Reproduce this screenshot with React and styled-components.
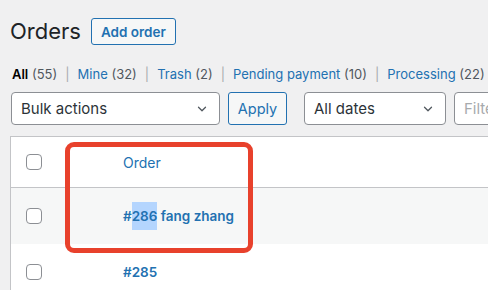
import React from "react";
import styled, { createGlobalStyle } from "styled-components";

const GlobalStyle = createGlobalStyle`
    html, body {
        margin: 0;
        padding: 0;
        background: #f0f0f1;
        overflow: hidden;
    }
    body {
        font-family: Inter, "Noto Sans", "Liberation Sans", sans-serif;
        color: #1d2327;
    }
`;

const Page = styled.div`
    position: relative;
    width: 488px;
    height: 290px;
    padding-left: 10px;
    box-sizing: border-box;
    overflow: hidden;
`;

const TitleRow = styled.div`
    display: flex;
    align-items: center;
    gap: 10px;
    padding-top: 18px;
    height: 27px;
`;

const Title = styled.h1`
    margin: 0;
    font-size: 22px;
    font-weight: 400;
    color: #1d2327;
    line-height: 27px;
`;

const OutlineButton = styled.button`
    flex: none;
    height: 27px;
    padding: 0 9px;
    border: 1px solid #2271b1;
    border-radius: 3px;
    background: #f6f7f7;
    color: #2271b1;
    font-family: inherit;
    font-size: ${(p) => p.$size || 13.5}px;
    font-weight: ${(p) => p.$weight || 600};
    box-sizing: border-box;
`;

const StatusList = styled.ul`
    display: flex;
    margin: 0;
    padding: 0;
    list-style: none;
    margin-top: 19px;
    padding-left: 2px;
    font-size: 13px;
    line-height: 20px;
    white-space: nowrap;
`;

const StatusItem = styled.li`
    color: #50575e;
`;

const StatusLink = styled.span`
    color: ${(p) => (p.$current ? "#000" : "#2271b1")};
    font-weight: ${(p) => (p.$current ? 600 : 400)};
`;

const Sep = styled.span`
    color: #a7aaad;
    margin: 0 8px;
`;

const Toolbar = styled.div`
    display: flex;
    align-items: center;
    margin-top: 8px;
    padding-left: 1px;
    gap: 8px;
    height: 33px;
`;

const Select = styled.div`
    flex: none;
    display: flex;
    align-items: center;
    justify-content: space-between;
    width: ${(p) => p.$w}px;
    height: 33px;
    padding: 0 10px 0 9px;
    box-sizing: border-box;
    border: 1px solid #8c8f94;
    border-radius: 4px;
    background: #fff;
    font-size: 15px;
    color: #2c3338;
`;

const ApplyButton = styled(OutlineButton)`
    height: 33px;
    width: 59px;
    padding: 0;
    margin-right: 9px;
`;

const FilterInput = styled.div`
    flex: none;
    width: 80px;
    height: 33px;
    padding-left: 9px;
    box-sizing: border-box;
    border: 1px solid #8c8f94;
    border-radius: 4px;
    background: #fff;
    font-size: 15px;
    line-height: 31px;
    color: #a7aaad;
`;

const Table = styled.div`
    margin-top: 11px;
    width: 600px;
    border: 1px solid #c3c4c7;
    background: #fff;
`;

const Row = styled.div`
    display: flex;
    align-items: center;
    height: ${(p) => p.$h}px;
    background: ${(p) => (p.$alt ? "#f6f7f7" : "#fff")};
    border-bottom: ${(p) => (p.$head ? "1px solid #c3c4c7" : "none")};
    box-sizing: border-box;
`;

const CheckCell = styled.div`
    width: 112px;
    padding-left: 15px;
    box-sizing: border-box;
    flex: none;
`;

const Checkbox = styled.span`
    display: block;
    width: 16px;
    height: 16px;
    border: 1px solid #8c8f94;
    border-radius: 4px;
    background: #fff;
    box-sizing: border-box;
`;

const OrderCell = styled.div`
    font-size: ${(p) => (p.$bold ? 13.5 : 14)}px;
    color: #2271b1;
    font-weight: ${(p) => (p.$bold ? 600 : 400)};
    white-space: nowrap;
`;

const Highlight = styled.span`
    background: #b4d5fe;
    padding: 6px 0;
`;

const Callout = styled.div`
    position: absolute;
    left: 65px;
    top: 142px;
    width: 188px;
    height: 111px;
    border: 5px solid #e8412c;
    border-radius: 9px;
    box-sizing: border-box;
    pointer-events: none;
`;

const Chevron = () => (
    <svg width="14" height="14" viewBox="0 0 20 20" fill="none">
        <path d="M5 7.5l5 5 5-5" stroke="#50575e" strokeWidth="1.8" strokeLinecap="round" strokeLinejoin="round" />
    </svg>
);

const statuses = [
    { label: "All", count: 55, current: true },
    { label: "Mine", count: 32 },
    { label: "Trash", count: 2 },
    { label: "Pending payment", count: 10 },
    { label: "Processing", count: 22 },
];

const App = () => {
    return (
        <Page>
            <GlobalStyle />
            <TitleRow>
                <Title>Orders</Title>
                <OutlineButton>Add order</OutlineButton>
            </TitleRow>
            <StatusList>
                {statuses.map((s, i) => (
                    <StatusItem key={s.label}>
                        <StatusLink $current={s.current}>{s.label}</StatusLink> ({s.count})
                        {i < statuses.length - 1 && <Sep>|</Sep>}
                    </StatusItem>
                ))}
            </StatusList>
            <Toolbar>
                <Select $w={209}>
                    Bulk actions <Chevron />
                </Select>
                <ApplyButton $weight={400} $size={14.5}>Apply</ApplyButton>
                <Select $w={142}>
                    All dates <Chevron />
                </Select>
                <FilterInput>Filter</FilterInput>
            </Toolbar>
            <Table>
                <Row $h={51} $head>
                    <CheckCell><Checkbox /></CheckCell>
                    <OrderCell>Order</OrderCell>
                </Row>
                <Row $h={56} $alt>
                    <CheckCell><Checkbox /></CheckCell>
                    <OrderCell $bold>
                        #<Highlight>286</Highlight> fang zhang
                    </OrderCell>
                </Row>
                <Row $h={56}>
                    <CheckCell><Checkbox /></CheckCell>
                    <OrderCell $bold>#285</OrderCell>
                </Row>
            </Table>
            <Callout />
        </Page>
    );
};

export default App;
